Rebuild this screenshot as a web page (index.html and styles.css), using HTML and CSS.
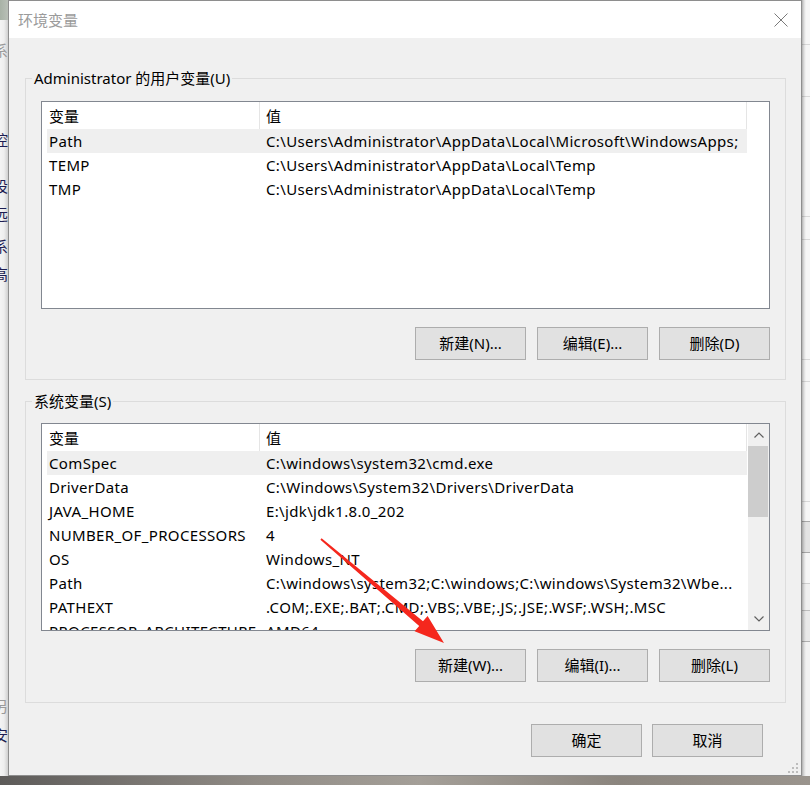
FILE: index.html
```html
<!DOCTYPE html>
<html lang="zh-CN">
<head>
<meta charset="utf-8">
<title>环境变量</title>
<link rel="stylesheet" href="styles.css">
</head>
<body>
<div class="screen">
  <div class="bg-left">
    <div class="bg-left-top"></div>
    <span class="ghost g1 dim">系</span>
    <span class="ghost g2">控</span>
    <span class="ghost g3">设</span>
    <span class="ghost g4">远</span>
    <span class="ghost g5">系</span>
    <span class="ghost g6">高</span>
    <span class="ghost g7 dim">另</span>
    <span class="ghost g8">安</span>
  </div>

  <div class="dialog">
    <div class="titlebar">
      <span class="title">环境变量</span>
      <svg class="close" width="14" height="14" viewBox="0 0 14 14"><path d="M0.5 0.5 L13.5 13.5 M13.5 0.5 L0.5 13.5" stroke="#7a7a7a" stroke-width="1" fill="none"/></svg>
    </div>
    <div class="body">
      <fieldset class="group">
        <legend>Administrator 的用户变量(U)</legend>
        <div class="group-inner">
          <div class="list">
            <div class="list-main">
              <div class="hdr"><div class="c1">变量</div><div class="c2">值</div></div>
              <div class="row sel"><div class="c1">Path</div><div class="c2">C:\Users\Administrator\AppData\Local\Microsoft\WindowsApps;</div></div>
              <div class="row"><div class="c1">TEMP</div><div class="c2">C:\Users\Administrator\AppData\Local\Temp</div></div>
              <div class="row"><div class="c1">TMP</div><div class="c2">C:\Users\Administrator\AppData\Local\Temp</div></div>
            </div>
          </div>
          <div class="btns">
            <button class="btn">新建(N)...</button>
            <button class="btn">编辑(E)...</button>
            <button class="btn">删除(D)</button>
          </div>
        </div>
      </fieldset>

      <fieldset class="group group2">
        <legend>系统变量(S)</legend>
        <div class="group-inner">
          <div class="list">
            <div class="list-main">
              <div class="hdr"><div class="c1">变量</div><div class="c2">值</div></div>
              <div class="row sel"><div class="c1">ComSpec</div><div class="c2">C:\windows\system32\cmd.exe</div></div>
              <div class="row"><div class="c1">DriverData</div><div class="c2">C:\Windows\System32\Drivers\DriverData</div></div>
              <div class="row"><div class="c1">JAVA_HOME</div><div class="c2">E:\jdk\jdk1.8.0_202</div></div>
              <div class="row"><div class="c1">NUMBER_OF_PROCESSORS</div><div class="c2">4</div></div>
              <div class="row"><div class="c1">OS</div><div class="c2">Windows_NT</div></div>
              <div class="row"><div class="c1">Path</div><div class="c2">C:\windows\system32;C:\windows;C:\windows\System32\Wbe...</div></div>
              <div class="row"><div class="c1">PATHEXT</div><div class="c2">.COM;.EXE;.BAT;.CMD;.VBS;.VBE;.JS;.JSE;.WSF;.WSH;.MSC</div></div>
              <div class="row"><div class="c1">PROCESSOR_ARCHITECTURE</div><div class="c2">AMD64</div></div>
            </div>
            <div class="vscroll">
              <div class="sb-btn"><svg width="10" height="6" viewBox="0 0 10 6"><path d="M0.5 5.5 L5 1 L9.5 5.5" stroke="#606060" stroke-width="1.2" fill="none"/></svg></div>
              <div class="sb-thumb"></div>
              <div class="sb-track"></div>
              <div class="sb-btn"><svg width="10" height="6" viewBox="0 0 10 6"><path d="M0.5 0.5 L5 5 L9.5 0.5" stroke="#606060" stroke-width="1.2" fill="none"/></svg></div>
            </div>
          </div>
          <div class="btns">
            <button class="btn">新建(W)...</button>
            <button class="btn">编辑(I)...</button>
            <button class="btn">删除(L)</button>
          </div>
        </div>
      </fieldset>

      <div class="footer">
        <button class="btn">确定</button>
        <button class="btn">取消</button>
      </div>
    </div>
    <svg class="grip" width="12" height="11" viewBox="0 0 12 11">
      <rect x="9" y="0" width="2" height="2" fill="#bdbdbd"/>
      <rect x="5" y="4" width="2" height="2" fill="#bdbdbd"/>
      <rect x="9" y="4" width="2" height="2" fill="#bdbdbd"/>
      <rect x="1" y="8" width="2" height="2" fill="#bdbdbd"/>
      <rect x="5" y="8" width="2" height="2" fill="#bdbdbd"/>
      <rect x="9" y="8" width="2" height="2" fill="#bdbdbd"/>
    </svg>
  </div>

  <div class="bg-right"></div>
</div>
<div class="bg-bottom"></div>

<svg class="arrow" width="810" height="785" viewBox="0 0 810 785">
  <polygon points="320.4,539.8 419.2,625.9 414.6,631.2 444,643 427.6,616 423,621.3 321.6,538.2" fill="#f5271d"/>
</svg>
</body>
</html>
```

FILE: styles.css
```css
* { box-sizing: border-box; }

html, body {
  margin: 0;
  padding: 0;
}

body {
  width: 810px;
  height: 785px;
  overflow: hidden;
  position: relative;
  font-family: "Noto Sans", "Noto Sans CJK SC", sans-serif;
  font-size: 15px;
  color: #000;
  background: #7a7671;
}

.screen {
  display: flex;
  height: 776px;
}

/* background window strips */
.bg-left {
  width: 8px;
  flex: none;
  display: flex;
  flex-direction: column;
  overflow: hidden;
  background: linear-gradient(to right, #f4f4f4 0, #eeeeee 4px, #cfcfcf 8px);
}

.bg-left-top {
  height: 20px;
  flex: none;
  background: linear-gradient(to right, #a8b2a6, #b9bfb7);
}

.ghost {
  display: block;
  flex: none;
  width: 15px;
  height: 15px;
  line-height: 15px;
  font-size: 15px;
  margin-left: -7px;
  color: #1d1d52;
  font-family: "Noto Sans CJK SC", sans-serif;
}

.ghost.dim { color: #9a9a9a; }
.g1 { margin-top: 22px; }
.g2 { margin-top: 75px; }
.g3 { margin-top: 31px; }
.g4 { margin-top: 13px; }
.g5 { margin-top: 17px; }
.g6 { margin-top: 13px; }
.g7 { margin-top: 417px; }
.g8 { margin-top: 14px; }

.bg-right {
  width: 8px;
  flex: none;
  background:
    linear-gradient(to right, rgba(0,0,0,0.28) 0, rgba(0,0,0,0.10) 2px, rgba(0,0,0,0) 4px),
    linear-gradient(to bottom,
      #f6f6f6 0, #f6f6f6 44px, #d8d8d8 44px, #d8d8d8 45px,
      #f6f6f6 45px, #f6f6f6 96px, #d8d8d8 96px, #d8d8d8 97px,
      #f6f6f6 97px, #f6f6f6 216px, #d8d8d8 216px, #d8d8d8 217px,
      #f6f6f6 217px, #f6f6f6 239px, #d8d8d8 239px, #d8d8d8 240px,
      #f6f6f6 240px, #f6f6f6 359px, #d8d8d8 359px, #d8d8d8 360px,
      #f6f6f6 360px, #f6f6f6 381px, #d8d8d8 381px, #d8d8d8 382px,
      #f6f6f6 382px, #f6f6f6 501px, #d8d8d8 501px, #d8d8d8 502px,
      #f6f6f6 502px, #f6f6f6 521px, #a9a9a9 521px, #a9a9a9 522px,
      #e3e3e3 522px, #e3e3e3 552px, #a9a9a9 552px, #a9a9a9 553px,
      #f6f6f6 553px, #f6f6f6 583px, #d0d0d0 583px, #d0d0d0 584px,
      #f0f0f0 584px, #f0f0f0 610px, #bdbdbd 610px, #bdbdbd 611px,
      #e9e9e9 611px, #e9e9e9 641px, #b0b0b0 641px, #b0b0b0 642px,
      #f2f2f2 642px, #f2f2f2 776px);
}

.bg-bottom {
  height: 9px;
  background: linear-gradient(to right, #5d5b59 0, #6e6b68 80px, #918c86 260px, #a49f98 420px, #8b857e 620px, #9a948d 810px);
}

/* dialog */
.dialog {
  width: 794px;
  height: 776px;
  flex: none;
  border: 1px solid #8e8e8e;
  background: #f0f0f0;
  display: flex;
  flex-direction: column;
  position: relative;
}

.titlebar {
  height: 37px;
  flex: none;
  background: #fff;
  display: flex;
  align-items: center;
  justify-content: space-between;
  padding: 0 13px 0 9px;
}

.title {
  color: #9b9b9b;
  font-size: 15px;
  line-height: 20px;
  margin-top: 1px;
}

.close { display: block; margin-top: 1px; }

.body {
  flex: 1;
  padding: 30px 15px 0 16px;
}

.group {
  margin: 0;
  padding: 0;
  min-width: 0;
  border: 1px solid #dcdcdc;
}

.group legend {
  margin-left: 6px;
  padding: 0 2px;
  line-height: 20px;
}

.group-inner {
  padding: 13px 15px 19px 15px;
}

.group2 { margin-top: 11px; }
.group2 .group-inner { padding-top: 12px; padding-bottom: 20px; }

.list {
  height: 208px;
  border: 1px solid #828790;
  background: #fff;
  overflow: hidden;
  display: flex;
}

.list-main {
  flex: 1;
  min-width: 0;
  overflow: hidden;
}

.hdr {
  display: flex;
  height: 27px;
  width: 705px;
}

.hdr .c1,
.hdr .c2 {
  display: flex;
  align-items: center;
  border-right: 1px solid #e5e5e5;
}

.hdr .c1 { width: 218px; padding-left: 7px; }
.hdr .c2 { width: 487px; padding-left: 6px; }

.row {
  display: flex;
  align-items: center;
  height: 24px;
  width: 700px;
  margin-left: 5px;
  white-space: nowrap;
  line-height: 20px;
  letter-spacing: 0.35px;
}

.row.sel { background: #efefef; }
.row .c1 { width: 212px; flex: none; padding-left: 2px; }
.row .c2 { padding-left: 7px; overflow: hidden; }

.vscroll {
  width: 21px;
  flex: none;
  background: #f0f0f0;
  display: flex;
  flex-direction: column;
}

.sb-btn {
  height: 22px;
  flex: none;
  display: flex;
  align-items: center;
  justify-content: center;
}

.sb-thumb {
  height: 71px;
  flex: none;
  margin: 0 1px 0 0;
  background: #cdcdcd;
}

.sb-track { flex: 1; }

.btns {
  display: flex;
  justify-content: flex-end;
  gap: 11px;
  margin-top: 18px;
}

.btn {
  width: 111px;
  height: 33px;
  margin: 0;
  padding: 0 0 2px 0;
  line-height: 20px;
  background: #e1e1e1;
  border: 1px solid #adadad;
  border-radius: 0;
  font-family: inherit;
  font-size: 15px;
  color: #000;
  display: flex;
  align-items: center;
  justify-content: center;
}

.footer {
  display: flex;
  justify-content: flex-end;
  gap: 10px;
  margin-top: 21px;
  padding-right: 23px;
}

.grip {
  position: absolute;
  right: 2px;
  bottom: 1px;
}

.arrow {
  position: absolute;
  left: 0;
  top: 0;
  pointer-events: none;
}
```
